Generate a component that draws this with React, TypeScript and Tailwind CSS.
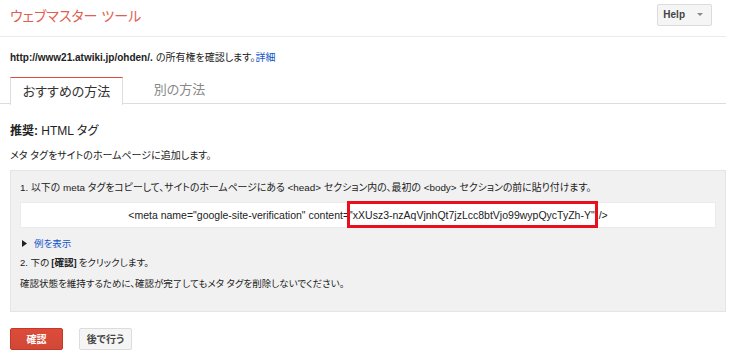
import React from "react";

export default function App() {
  const font = "font-['Liberation_Sans','Noto_Sans_CJK_JP',sans-serif] [font-feature-settings:'palt']";
  return (
    <div className={`w-[735px] h-[362px] bg-white text-[#222] ${font} overflow-hidden`}>
      <div className="w-[726px]">
        {/* header */}
        <div className="h-[37px] flex items-center justify-between pl-[10px] pr-[14px] border-b border-[#ebebeb]">
          <div className="text-[14px] text-[#e0604f] leading-none mt-[-4px]">ウェブマスター ツール</div>
          <div className="mt-[-7px] w-[55px] h-[22px] flex items-center justify-end gap-[12px] pr-[8px] bg-[#f5f5f5] border border-[#dcdcdc] rounded-[2px] text-[10px] font-bold text-[#444]">
            <span>Help</span>
            <svg width="6" height="3" viewBox="0 0 6 3"><path d="M0 0h6L3 3z" fill="#888" /></svg>
          </div>
        </div>
        {/* ownership */}
        <div className="h-[39px] flex items-center pl-[10px] text-[10px] pt-[2px]">
          <span className="font-bold text-[#222]">http://www21.atwiki.jp/ohden/.</span>
          <span className="ml-[3px]">の所有権を確認します。</span>
          <span className="text-[#1155cc]">詳細</span>
        </div>
        {/* tabs */}
        <div className="flex h-[28px] border-b border-[#ddd]">
          <div className="w-[10px]" />
          <div className="w-[113px] h-[28px] bg-white border-t border-t-[#dd4b39] border-x border-x-[#ddd] flex items-center justify-center text-[13px] text-[#333] relative top-[1px]">
            おすすめの方法
          </div>
          <div className="w-[113px] flex items-center justify-center text-[13px] text-[#888]">別の方法</div>
        </div>
        {/* recommended */}
        <div className="pl-[10px] pt-[18px] text-[12px] leading-[18px] h-[45px]">
          <span className="font-bold">推奨:</span> HTML タグ
        </div>
        <div className="pl-[10px] text-[10px] leading-[14px] h-[21px]">メタ タグをサイトのホームページに追加します。</div>
        {/* box */}
        <div className="ml-[10px] h-[142px] bg-[#f1f1f1] border border-[#e5e5e5] px-[9px] pt-[10px] text-[9.5px] leading-[14px]">
          <div className="h-[22px] text-[9.9px]">
            1. 以下の meta タグをコピーして、サイトのホームページにある &lt;head&gt; セクション内の、最初の &lt;body&gt; セクションの前に貼り付けます。
          </div>
          <div className="h-[26px] mt-[-1px] bg-white border border-[#ebebeb] flex items-center justify-center text-[10.5px] text-[#222] font-['Liberation_Sans',sans-serif] [font-feature-settings:normal]">
            <span>&lt;meta name="google-site-verification" content=</span>
            <span className="relative">
              "xXUsz3-nzAqVjnhQt7jzLcc8btVjo99wypQycTyZh-Y"
              <span className="absolute left-[-2px] right-[-3px] top-[-7px] bottom-[-6px] border-[3px] border-[#e8101c]" />
            </span>
            <span className="ml-[4px]"> /&gt;</span>
          </div>
          <div className="h-[19px] mt-[6px] flex items-center pl-[2px]">
            <svg width="5" height="7" viewBox="0 0 5 7" className="mr-[7px]"><path d="M0 0l5 3.5-5 3.5z" fill="#222" /></svg>
            <span className="text-[#1155cc]">例を表示</span>
          </div>
          <div className="h-[20px] flex items-center">
            2. 下の <span className="font-bold mx-[2px]">[確認]</span> をクリックします。
          </div>
          <div className="h-[21px] flex items-center">
            確認状態を維持するために、確認が完了してもメタ タグを削除しないでください。
          </div>
        </div>
        {/* buttons */}
        <div className="flex gap-[16px] pl-[10px] mt-[16px]">
          <div className="w-[53px] h-[22px] rounded-[2px] bg-gradient-to-b from-[#dd4b39] to-[#d14836] border border-[#c53727] text-white text-[10px] font-bold flex items-center justify-center">
            確認
          </div>
          <div className="w-[53px] h-[22px] rounded-[2px] bg-[#f5f5f5] border border-[#dcdcdc] text-[#444] text-[10px] font-bold flex items-center justify-center">
            後で行う
          </div>
        </div>
      </div>
    </div>
  );
}
